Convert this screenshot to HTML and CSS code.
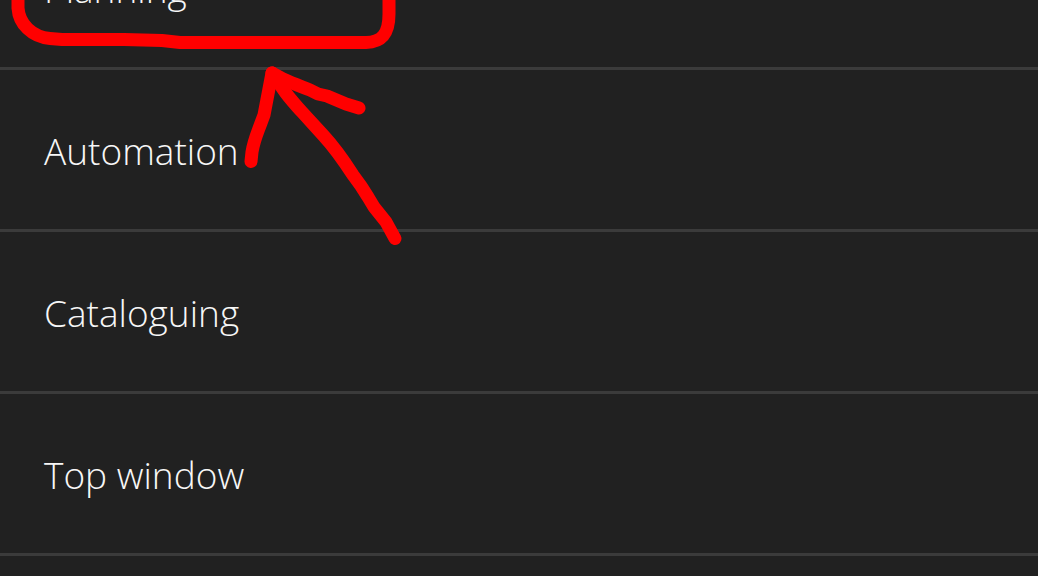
FILE: index.html
```html
<!DOCTYPE html>
<html lang="en">
<head>
<meta charset="utf-8">
<title>Menu</title>
<link rel="stylesheet" href="styles.css">
</head>
<body>
<main class="screen">
  <nav class="menu" aria-label="Sections">
    <a class="menu-item" href="#planning">Planning</a>
    <a class="menu-item" href="#automation">Automation</a>
    <a class="menu-item" href="#cataloguing">Cataloguing</a>
    <a class="menu-item" href="#top-window">Top window</a>
  </nav>
  <svg class="markup" width="420" height="260" viewBox="0 0 420 260" aria-hidden="true">
    <path d="M18 -8V8C19 24 32 37 50 38.500L62 39.500H124L162 40.500L180 42.500H366C382 42 389 34 389 14V-8"/>
    <path d="M251 161.500L252 152C254 140 257 134 261 123L264 115L272 73L283 79C294 84 300 86 310 90L318 94L327 96L346 104L359 108"/>
    <path d="M272 73L283 89C289 98 294 103 302 112L323 135C335 148 344 161 353 175L361 186L368 197L374 207L386 222L395 238.500"/>
  </svg>
</main>
</body>
</html>
```
FILE: styles.css
```css
body {
  margin: 0;
  background: #212121;
  color: #f7f7f7;
  font-family: "Open Sans", "Noto Sans", sans-serif;
}

.screen {
  position: relative;
  height: 100vh;
  overflow: hidden;
}

.menu {
  display: flex;
  flex-direction: column;
  margin-top: -92px;
}

.menu-item {
  display: flex;
  flex: none;
  align-items: center;
  box-sizing: border-box;
  min-height: 162px;
  padding: 2px 44px 0;
  border-bottom: 3px solid #3b3b3b;
  color: inherit;
  font-size: 37px;
  font-weight: 300;
  line-height: 52px;
  text-decoration: none;
}

.markup {
  position: absolute;
  top: 0;
  left: 0;
  fill: none;
  stroke: #f00;
  stroke-width: 13px;
  stroke-linecap: round;
  stroke-linejoin: round;
  pointer-events: none;
}
```
